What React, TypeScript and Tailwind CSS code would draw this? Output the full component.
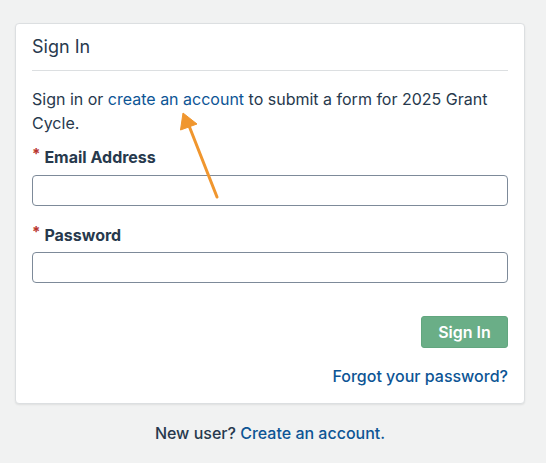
export default function App() {
  return (
    <div
      className="relative min-h-[463px] w-full bg-[#f1f2f2] pl-[15px] pt-[23px] text-[#27394d]"
      style={{ fontFamily: 'Inter, "Noto Sans", sans-serif' }}
    >
      {/* sign-in card */}
      <div className="w-[510px] rounded-[4px] border border-[#dcdfe1] bg-white px-[16px] pb-[15px] pt-[9px] shadow-[0_1px_2px_rgba(0,0,0,0.08)]">
        <h2 className="border-b border-[#dcdfe1] pb-[10px] text-[18px] leading-[27px]">Sign In</h2>

        <p className="mt-[16px] text-[16px] leading-[24px]">
          Sign in or <a className="text-[#0d5595]">create an account</a> to submit a form for 2025 Grant Cycle.
        </p>

        <label className="mt-[10px] flex items-start text-[16px] font-bold leading-[24px]">
          <span className="mr-[4px] mt-[1px] text-[15px] leading-[16px] text-[#b8342c]">*</span>
          Email Address
        </label>
        <input className="mt-[6px] block h-[31px] w-full rounded-[4px] border border-[#7d8a99] bg-white px-2 outline-none" />

        <label className="mt-[17px] flex items-start text-[16px] font-bold leading-[24px]">
          <span className="mr-[4px] mt-[1px] text-[15px] leading-[16px] text-[#b8342c]">*</span>
          Password
        </label>
        <input
          type="password"
          className="mt-[5px] block h-[31px] w-full rounded-[4px] border border-[#7d8a99] bg-white px-2 outline-none"
        />

        <div className="mt-[33px] flex justify-end">
          <button className="h-[32px] w-[87px] rounded-[3px] border border-[#62a67f] bg-[#6aae87] text-[16px] font-semibold text-white">
            Sign In
          </button>
        </div>

        <div className="mt-[16px] flex justify-end">
          <a className="text-[16px] font-medium leading-[24px] text-[#0d5595]">Forgot your password?</a>
        </div>
      </div>

      <p className="mt-[17px] w-[510px] text-center text-[16px] font-medium leading-[24px]">
        New user? <a className="text-[#0d5595]">Create an account.</a>
      </p>

      {/* annotation arrow */}
      <svg className="pointer-events-none absolute left-0 top-0" width="546" height="463">
        <line x1="217" y1="197" x2="189.5" y2="127" stroke="#f0962e" strokeWidth="3" strokeLinecap="round" />
        <polygon points="183,113 197,124 180.5,130" fill="#f0962e" stroke="#f0962e" strokeWidth="1" strokeLinejoin="round" />
      </svg>
    </div>
  );
}
